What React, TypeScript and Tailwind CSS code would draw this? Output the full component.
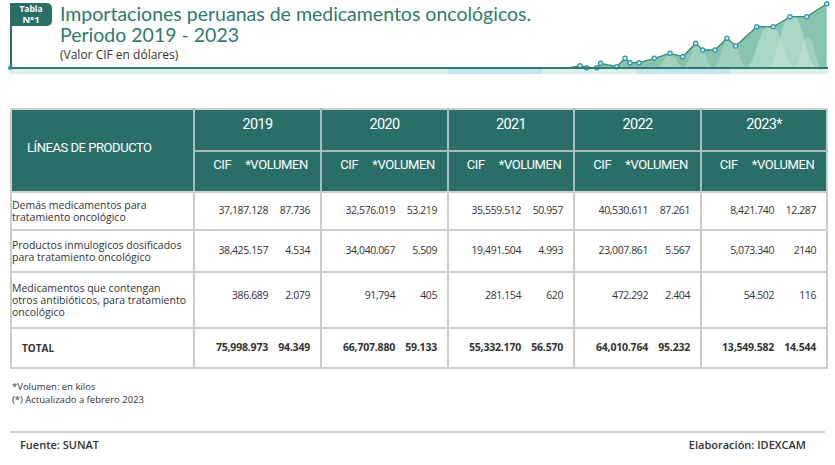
const pts: [number, number][] = [
  [10, 62.7], [16.7, 64.7], [26.7, 64.7], [30.7, 60.3], [46.7, 63.7], [55, 55.3], [60, 59.7],
  [69, 59.7], [84.3, 55.3], [100, 50.3], [112.7, 53.7], [125.7, 40.3], [132.7, 47], [145, 47],
  [157, 35.3], [165.7, 43], [186.7, 23.7], [203.3, 23.7], [220, 13.7], [236.7, 13.7], [256.7, 0.8],
];

const linePath = "M0,64.6 L" + pts.map((p) => p.join(",")).join(" L");
const areaPath = linePath + " L256.7,64.6 Z";

// bell shaped highlights inside the area
const bell = (cx: number, w: number, h: number) =>
  `M${cx - w},64.6 C${cx - w / 2},64.6 ${cx - w / 2},${64.6 - h} ${cx},${64.6 - h} C${cx + w / 2},${64.6 - h} ${cx + w / 2},64.6 ${cx + w},64.6 Z`;

function TrendChart() {
  return (
    <svg width="258" height="64" viewBox="0 0 258 64" className="ml-auto shrink-0 self-end overflow-visible">
      <defs>
        <clipPath id="areaClip">
          <path d={areaPath} />
        </clipPath>
      </defs>
      <path d={areaPath} fill="#88c4ad" />
      <g clipPath="url(#areaClip)">
        <path d={bell(100, 14, 12)} fill="#a9d5c3" opacity="0.8" />
        <path d={bell(128, 16, 22)} fill="#a9d5c3" opacity="0.7" />
        <path d={bell(160, 18, 28)} fill="#a9d5c3" opacity="0.7" />
        <path d={bell(200, 26, 42)} fill="#b7ddcd" opacity="0.7" />
        <path d={bell(222, 26, 52)} fill="#c1e2d4" opacity="0.6" />
        <path d={bell(238, 14, 30)} fill="#d2eadf" opacity="0.35" />
      </g>
      <path d={linePath} fill="none" stroke="#3b8a76" strokeWidth="1.3" strokeLinejoin="round" />
      {pts.map(([x, y], i) => (
        <circle key={i} cx={x} cy={y} r="2.1" fill="#cdebf3" stroke="#2d92b3" strokeWidth="1.2" />
      ))}
    </svg>
  );
}

function Header() {
  return (
    <div className="pt-[3px] pl-[10px] pr-[7px]">
      <div className="flex h-[64px]">
        <div className="flex w-[42px] shrink-0 flex-col">
          <div className="flex h-[23px] flex-col items-center justify-center rounded-r-[5px] bg-[#296e67] font-['Open_Sans',sans-serif] font-bold leading-[10.5px] text-white">
            <span className="text-[8.5px]">Tabla</span>
            <span className="text-[9.5px]">N°1</span>
          </div>
          <div className="w-[2px] flex-1 bg-[#296e67]" />
        </div>
        <div className="ml-[8px] whitespace-nowrap">
          <div className="font-['Lato',sans-serif] text-[19.5px] leading-[21px] text-[#2e7a6e]">
            Importaciones peruanas de medicamentos oncológicos.
            <br />
            Periodo 2019 - 2023
          </div>
          <div className="mt-[2px] font-['Open_Sans',sans-serif] text-[12px] leading-[16px] text-[#333]">
            (Valor CIF en dólares)
          </div>
        </div>
        <TrendChart />
      </div>
      <div className="relative h-[2px] bg-[#2e7a6e]">
        <span className="absolute -left-[2px] -top-[1px] h-[4px] w-[4px] rounded-full bg-[#2d92b3]" />
      </div>
      <div className="h-[5px] bg-[linear-gradient(90deg,#dcefec_53.5%,#c6e3ee_53.5%,#c6e3ee_65%,#dcefec_65%,#dcefec_76.5%,#c6e3ee_76.5%,#c6e3ee_88%,#dcefec_88%)]" />
    </div>
  );
}

const years = [
  { y: "2019", cif: "w-[74px]" },
  { y: "2020", cif: "w-[74px]" },
  { y: "2021", cif: "w-[73px]" },
  { y: "2022", cif: "w-[74px]" },
  { y: "2023*", cif: "w-[73px]" },
];

type Row = { label: React.ReactNode; vals: [string, string][]; h: string; top?: boolean };

const rows: Row[] = [
  {
    label: (
      <>
        Demás medicamentos para
        <br />
        tratamiento oncológico
      </>
    ),
    vals: [["37,187.128", "87.736"], ["32,576.019", "53.219"], ["35,559.512", "50.957"], ["40,530.611", "87.261"], ["8,421.740", "12.287"]],
    h: "h-[38px]",
  },
  {
    label: (
      <>
        Productos inmulogicos dosificados
        <br />
        para tratamiento oncológico
      </>
    ),
    vals: [["38,425.157", "4.534"], ["34,040.067", "5.509"], ["19,491.504", "4.993"], ["23,007.861", "5.567"], ["5,073.340", "2140"]],
    h: "h-[42px]",
  },
  {
    label: (
      <>
        Medicamentos que contengan
        <br />
        otros antibióticos, para tratamiento
        <br />
        oncológico
      </>
    ),
    vals: [["386.689", "2.079"], ["91,794", "405"], ["281.154", "620"], ["472.292", "2.404"], ["54.502", "116"]],
    h: "h-[56px]",
    top: true,
  },
];

const totals: [string, string][] = [
  ["75,998.973", "94.349"],
  ["66,707.880", "59.133"],
  ["55,332.170", "56.570"],
  ["64,010.764", "95.232"],
  ["13,549.582", "14.544"],
];

function DataTable() {
  return (
    <table className="mt-[34px] ml-[10px] w-[817px] table-fixed border-collapse border-2 border-[#cdcdcd] font-['Open_Sans',sans-serif] text-[#333]">
      <colgroup>
        <col className="w-[183px]" />
        {years.map((c) => (
          <>
            <col key={c.y + "a"} className={c.cif} />
            <col key={c.y + "b"} className="w-[53px]" />
          </>
        ))}
      </colgroup>
      <thead className="bg-[#296e67] font-['Roboto',sans-serif] text-white">
        <tr className="h-[42px]">
          <th rowSpan={2} className="border-b-2 border-[#cdcdcd] pl-[15px] pb-[6px] text-left text-[13px] font-normal tracking-[-0.45px]">
            LÍNEAS DE PRODUCTO
          </th>
          {years.map((c) => (
            <th
              key={c.y}
              colSpan={2}
              className="border-l-2 border-b-2 border-l-[#a9bcb8] border-b-[#a9bcb8] pb-[10px] text-center text-[14.5px] font-normal tracking-[-0.6px]"
            >
              {c.y}
            </th>
          ))}
        </tr>
        <tr className="h-[41px]">
          {years.map((c) => (
            <th key={c.y} colSpan={2} className="border-l-2 border-b-2 border-l-[#a9bcb8] border-b-[#cdcdcd] pb-[14px] text-[13px] font-normal tracking-[-0.4px]">
              <div className="flex justify-center gap-[14px] pl-[6px]">
                <span>CIF</span>
                <span>*VOLUMEN</span>
              </div>
            </th>
          ))}
        </tr>
      </thead>
      <tbody>
        {rows.map((r, i) => (
          <tr key={i} className={`${r.h} border-b-2 border-[#cdcdcd]`}>
            <td className="whitespace-nowrap pb-[1px] text-[10.5px] leading-[12px]">{r.label}</td>
            {r.vals.map(([cif, vol], j) => (
              <>
                <td
                  key={j + "c"}
                  className={`border-l-2 border-[#cdcdcd] text-right text-[10.5px] tracking-[-0.4px] ${r.top ? "align-top pt-[15px]" : ""}`}
                >
                  {cif}
                </td>
                <td
                  key={j + "v"}
                  className={`pr-[10px] text-right text-[10.5px] tracking-[-0.4px] ${r.top ? "align-top pt-[15px]" : ""}`}
                >
                  {vol}
                </td>
              </>
            ))}
          </tr>
        ))}
        <tr className="h-[40px]">
          <td className="pl-[10px] text-[10px] font-bold">TOTAL</td>
          {totals.map(([cif, vol], j) => (
            <>
              <td key={j + "c"} className="border-l-2 border-[#cdcdcd] text-right text-[10.5px] font-bold tracking-[-0.2px]">
                {cif}
              </td>
              <td key={j + "v"} className="pr-[10px] text-right text-[10.5px] font-bold tracking-[-0.2px]">
                {vol}
              </td>
            </>
          ))}
        </tr>
      </tbody>
    </table>
  );
}

function Notes() {
  return (
    <div className="mt-[11px] ml-[12px] font-['Open_Sans',sans-serif] text-[9.5px] leading-[13px] text-[#333]">
      <p>*Volumen: en kilos</p>
      <p>(*) Actualizado a febrero 2023</p>
    </div>
  );
}

function Footer() {
  return (
    <div className="mx-[10px] mt-[25px] border-t-2 border-[#cfcfcf] pt-[4px]">
      <div className="flex justify-between pl-[10px] pr-[19px] font-['Open_Sans',sans-serif] text-[11px] font-semibold text-[#333]">
        <span>Fuente: SUNAT</span>
        <span>Elaboración: IDEXCAM</span>
      </div>
    </div>
  );
}

export default function App() {
  return (
    <div className="h-[465px] w-[835px] overflow-hidden bg-white">
      <Header />
      <DataTable />
      <Notes />
      <Footer />
    </div>
  );
}
